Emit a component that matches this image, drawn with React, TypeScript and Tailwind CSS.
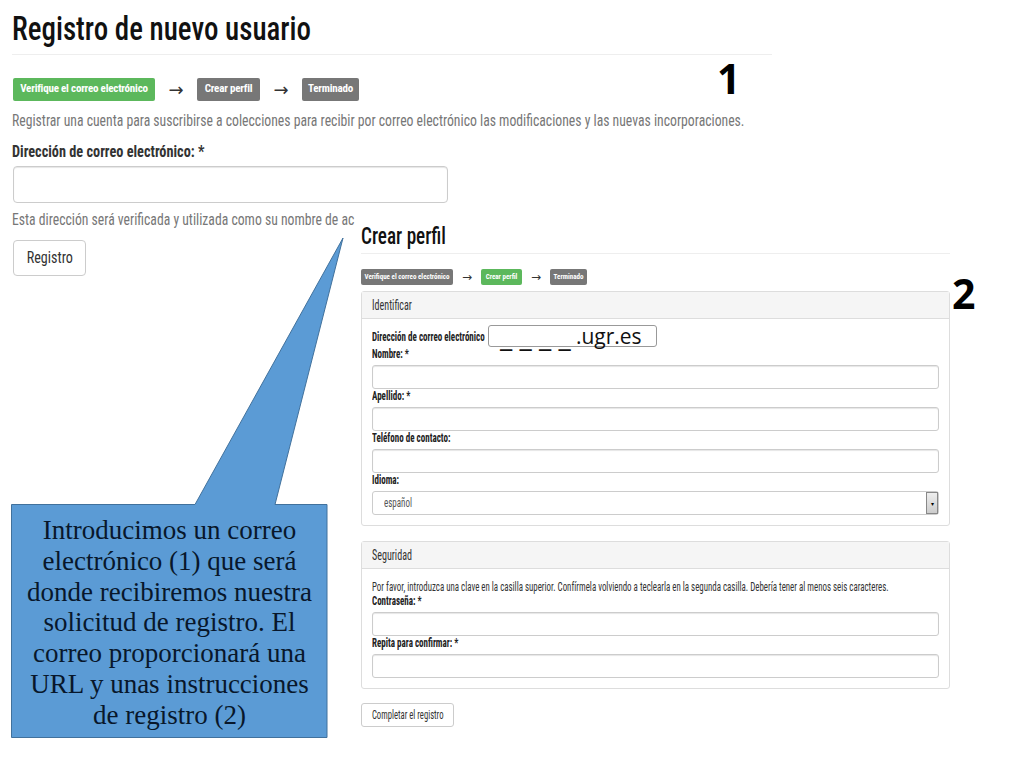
const narrow = "font-['Liberation_Sans_Narrow','Roboto_Condensed','Liberation_Sans',sans-serif]";
const smallLabel = "h-[14px] origin-left scale-x-[0.75] whitespace-nowrap text-[12px] leading-[14px] font-bold text-[#222]";
const panelHead = "h-[27px] border-b border-[#ddd] bg-[#f5f5f5] pl-[10px] text-[14px] leading-[27px] text-[#333]";

function Step({ label, width, active, big }: { label: string; width: string; active?: boolean; big?: boolean }) {
  return (
    <span
      className={`${active ? "bg-[#5cb85c]" : "bg-[#777777]"} ${
        big ? "h-[23px] text-[11px] tracking-[-0.2px]" : "h-[16px] text-[7px]"
      } ${width} flex items-center justify-center rounded-[2px] font-bold text-white whitespace-nowrap`}
    >
      {label}
    </span>
  );
}

function Arrow({ big }: { big?: boolean }) {
  return big ? (
    <span className="w-[42px] text-center font-['DejaVu_Sans',sans-serif] text-[18px] leading-[23px] text-[#333]">→</span>
  ) : (
    <span className="w-[28px] text-center font-['DejaVu_Sans',sans-serif] text-[12px] leading-[16px] text-[#333]">→</span>
  );
}

function Field({ label, required }: { label: string; required?: boolean }) {
  return (
    <div>
      <div className={smallLabel}>
        {label}:{required ? " *" : ""}
      </div>
      <div className="mt-[4px] h-[24px] rounded-[3px] border border-[#ccc] bg-white shadow-[inset_0_1px_1px_rgba(0,0,0,0.1)]" />
    </div>
  );
}

function Callout() {
  return (
    <svg className="absolute left-0 top-0 h-[768px] w-[1024px]" viewBox="0 0 1024 768">
      <path d="M11.5 504.5H195L343 238L275 504.5H327V737.5H11.5Z" fill="#5b9bd5" stroke="#41719c" strokeWidth="1" />
    </svg>
  );
}

export default function App() {
  return (
    <div className={`relative h-[768px] w-[1024px] overflow-hidden bg-white ${narrow}`}>
      {/* Captura 1 */}
      <div className="absolute left-[12px] top-0 w-[760px]">
        <div className="h-[55px] border-b border-[#eee] pt-[8px]">
          <h1 className="origin-left scale-x-[0.878] whitespace-nowrap text-[33px] leading-[42px] font-medium text-[#111]">Registro de nuevo usuario</h1>
        </div>
        <div className="mt-[23px] flex items-center pl-[1px]">
          <Step label="Verifique el correo electrónico" width="w-[142px]" active big />
          <Arrow big />
          <Step label="Crear perfil" width="w-[63px]" big />
          <Arrow big />
          <Step label="Terminado" width="w-[57px]" big />
        </div>
        <p className="mt-[10px] h-[18px] origin-left scale-x-[0.806] text-[17px] leading-[18px] text-[#777] whitespace-nowrap">
          Registrar una cuenta para suscribirse a colecciones para recibir por correo electrónico las modificaciones y las nuevas incorporaciones.
        </p>
        <div className="mt-[13px] h-[18px] origin-left scale-x-[0.84] text-[17px] leading-[18px] font-bold text-[#333] whitespace-nowrap">Dirección de correo electrónico: *</div>
        <div className="ml-[1px] mt-[6px] h-[37px] w-[435px] rounded-[4px] border border-[#ccc] shadow-[inset_0_1px_1px_rgba(0,0,0,0.1)]" />
        <p className="mt-[7px] h-[18px] origin-left scale-x-[0.805] text-[17px] leading-[18px] text-[#777] whitespace-nowrap">Esta dirección será verificada y utilizada como su nombre de ac</p>
        <button className="ml-[1px] mt-[12px] flex h-[36px] w-[73px] items-center justify-center rounded-[4px] border border-[#ccc] bg-white text-[#333]">
          <span className="scale-x-[0.83] text-[17px]">Registro</span>
        </button>
      </div>

      {/* Captura 2 */}
      <div className="absolute left-[355px] top-[222px] h-[520px] w-[600px] bg-white pl-[6px] pr-[5px]">
        <div className="h-[32px] border-b border-[#eee]">
          <h2 className="origin-left scale-x-[0.8] text-[24px] leading-[28px] font-medium text-[#111]">Crear perfil</h2>
        </div>
        <div className="mt-[15px] flex items-center">
          <Step label="Verifique el correo electrónico" width="w-[92px]" />
          <Arrow />
          <Step label="Crear perfil" width="w-[41px]" active />
          <Arrow />
          <Step label="Terminado" width="w-[37px]" />
        </div>

        <section className="mt-[6px] h-[235px] rounded-[3px] border border-[#ddd]">
          <div className={panelHead}>
            <span className="inline-block origin-left scale-x-[0.72]">Identificar</span>
          </div>
          <div className="px-[10px] pt-[11px]">
            <div className={smallLabel}>Dirección de correo electrónico</div>
            <div className="mt-[3px]">
              <Field label="Nombre" required />
              <Field label="Apellido" required />
              <Field label="Teléfono de contacto" />
              <div className={smallLabel}>Idioma:</div>
              <div className="mt-[4px] flex h-[24px] items-center justify-between rounded-[3px] border border-[#ccc] pl-[11px] text-[12px] text-[#555]">
                <span className="origin-left scale-x-[0.75]">español</span>
                <span className="flex h-[22px] w-[12px] items-center justify-center border border-[#888] bg-gradient-to-b from-[#eee] to-[#ccc] text-[6px] text-black">▾</span>
              </div>
            </div>
          </div>
        </section>

        <section className="mt-[15px] h-[148px] rounded-[3px] border border-[#ddd]">
          <div className={panelHead}>
            <span className="inline-block origin-left scale-x-[0.72]">Seguridad</span>
          </div>
          <div className="px-[10px] pt-[11px]">
            <p className="h-[14px] origin-left scale-x-[0.74] text-[12px] leading-[14px] text-[#333] whitespace-nowrap">
              Por favor, introduzca una clave en la casilla superior. Confírmela volviendo a teclearla en la segunda casilla. Debería tener al menos seis caracteres.
            </p>
            <Field label="Contraseña" required />
            <Field label="Repita para confirmar" required />
          </div>
        </section>

        <button className="mt-[14px] flex h-[24px] w-[93px] items-center justify-center rounded-[3px] border border-[#ccc] bg-white text-[#333]">
          <span className="scale-x-[0.72] whitespace-nowrap text-[12px]">Completar el registro</span>
        </button>
      </div>

      {/* Recuadro del correo */}
      <div className="absolute left-[488px] top-[325px] flex h-[22px] w-[169px] items-center whitespace-nowrap rounded-[3px] border border-[#999] bg-white pl-[11px] font-['Open_Sans',sans-serif] text-[21px] leading-[22px] text-[#111]">
        <span className="text-[28px] leading-[22px]">_ _ _ _</span>
        <span className="ml-[5px]">.ugr.es</span>
      </div>

      <div className="absolute left-[717px] top-[51px] font-['Open_Sans',sans-serif] text-[41px] leading-[54px] font-bold text-black">1</div>
      <div className="absolute left-[952px] top-[266px] font-['Open_Sans',sans-serif] text-[41px] leading-[54px] font-bold text-black">2</div>

      <Callout />
      <div className="absolute left-[12px] top-[515px] w-[315px] text-center font-['Liberation_Serif',serif] text-[27px] leading-[30.8px] text-[#08172b]">
        Introducimos un correo<br />
        electrónico (1) que será<br />
        donde recibiremos nuestra<br />
        solicitud de registro. El<br />
        correo proporcionará una<br />
        URL y unas instrucciones<br />
        de registro (2)
      </div>
    </div>
  );
}
